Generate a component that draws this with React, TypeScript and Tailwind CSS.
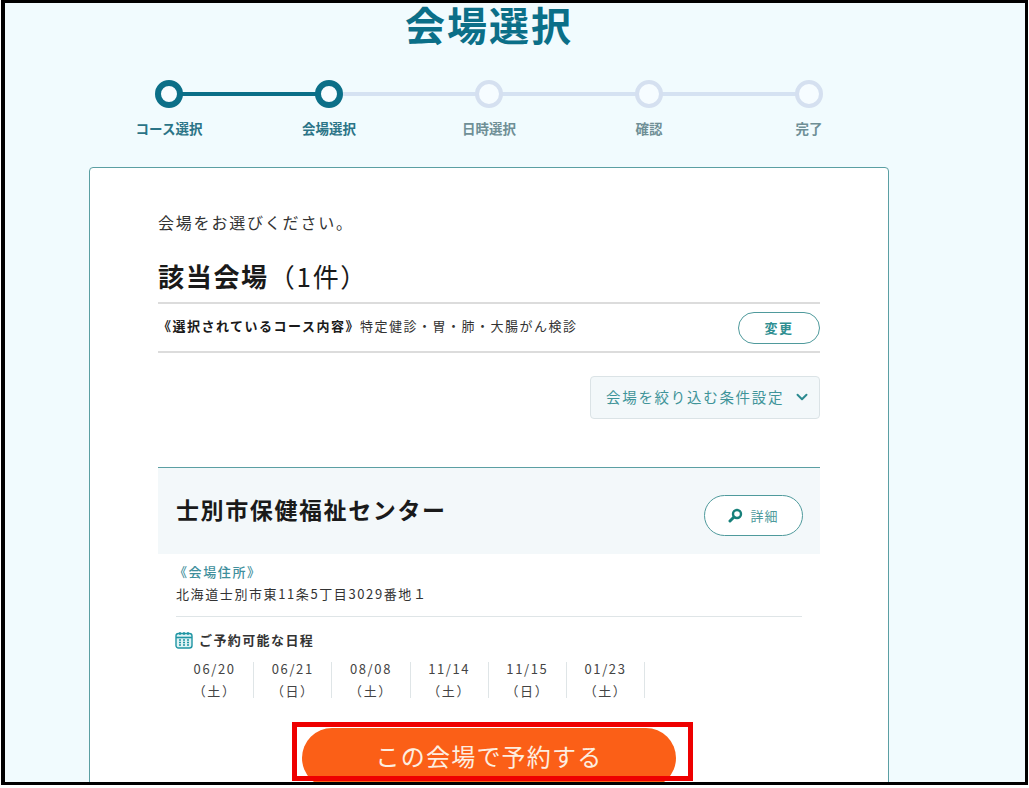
// App.tsx
import { ChevronDown } from "lucide-react";

const STEPS = [
  { label: "コース選択", done: true },
  { label: "会場選択", done: true },
  { label: "日時選択", done: false },
  { label: "確認", done: false },
  { label: "完了", done: false },
];

const DATES = [
  { date: "06/20", day: "（土）" },
  { date: "06/21", day: "（日）" },
  { date: "08/08", day: "（土）" },
  { date: "11/14", day: "（土）" },
  { date: "11/15", day: "（日）" },
  { date: "01/23", day: "（土）" },
];

function Stepper() {
  return (
    <div className="relative mt-[33px] ml-[84px] w-[800px]">
      {/* connecting line runs behind the circles */}
      <div className="absolute left-[80px] top-[12px] w-[640px] flex">
        <div className="w-[160px] h-[4px] bg-[#0b6f88]" />
        <div className="flex-1 h-[4px] bg-[#d5e2f2]" />
      </div>
      <div className="relative flex">
        {STEPS.map((s) => (
          <div key={s.label} className="w-[160px] flex flex-col items-center">
            <div
              className={
                s.done
                  ? "w-[28px] h-[28px] rounded-full border-[6px] border-[#0b6f88] bg-[#f6fcff]"
                  : "w-[28px] h-[28px] rounded-full border-[4px] border-[#d5e0f0] bg-[#f6fcff]"
              }
            />
            <div
              className={
                s.done
                  ? "mt-[10px] text-[13.5px] leading-[20px] font-bold text-[#2b7487]"
                  : "mt-[10px] text-[13.5px] leading-[20px] font-bold text-[#6f8f96]"
              }
            >
              {s.label}
            </div>
          </div>
        ))}
      </div>
    </div>
  );
}

function CalendarIcon() {
  return (
    <svg width="18" height="18" viewBox="0 0 18 18" className="shrink-0">
      <rect x="1" y="2.5" width="16" height="14.5" rx="2.5" fill="#dff3f5" stroke="#1f95a3" strokeWidth="1.4" />
      <path d="M1 6.5h16" stroke="#1f95a3" strokeWidth="1.6" />
      <path d="M5 1v3M9 1v3M13 1v3" stroke="#1f95a3" strokeWidth="1.4" />
      <path
        d="M4 9h2M8 9h2M12 9h2M4 11.5h2M8 11.5h2M12 11.5h2M4 14h2M8 14h2M12 14h2"
        stroke="#1f95a3"
        strokeWidth="1.3"
      />
    </svg>
  );
}

function SearchIcon() {
  return (
    <svg width="15" height="15" viewBox="0 0 15 15" className="shrink-0">
      <circle cx="9" cy="6" r="4" fill="none" stroke="#17807a" strokeWidth="2.4" />
      <path d="M6 9l-4 4" stroke="#17807a" strokeWidth="3" strokeLinecap="round" />
    </svg>
  );
}

export default function App() {
  return (
    <div
      className="relative w-[1029px] h-[788px] overflow-hidden bg-white"
      style={{ fontFamily: '"Noto Sans CJK JP", "Noto Sans", sans-serif' }}
    >
      <div className="ml-[1px] w-[1027px] h-[785px] border-t-[3px] border-l-[4px] border-r-[3px] border-b-[3px] border-black bg-[#f1fbfe] overflow-hidden">
        {/* Heading */}
        <h1 className="-mt-[2px] ml-[400px] text-[40px] leading-[46px] font-bold tracking-[2px] text-[#0b6f88]">
          会場選択
        </h1>

        <Stepper />

        {/* Main card */}
        <div className="mt-[29px] ml-[84px] w-[800px] h-[640px] bg-white border border-[#5b9fa3] rounded-[4px] pt-[42px] px-[68px]">
          <p className="text-[16px] leading-[24px] tracking-[1.8px] text-[#333]">会場をお選びください。</p>

          <h2 className="mt-[24px] text-[26px] leading-[36px] font-bold tracking-[1.7px] text-[#1a1a1a]">
            該当会場<span className="font-normal">（1件）</span>
          </h2>

          {/* Selected course */}
          <div className="mt-[8px] h-[51px] border-y-2 border-[#dcdcdc] flex items-center justify-between">
            <p className="-mt-[3px] text-[13px] tracking-[1.5px] text-[#333]">
              <span className="font-bold text-[#1a1a1a]">《選択されているコース内容》</span>特定健診・胃・肺・大腸がん検診
            </p>
            <button className="w-[82px] h-[32px] rounded-full border border-[#4f9a9c] bg-white text-[13px] font-bold tracking-[1.5px] text-[#2f8f92]">
              変更
            </button>
          </div>

          {/* Filter toggle */}
          <div className="mt-[23px] flex justify-end">
            <button className="w-[230px] h-[43px] pl-[15px] pb-[2px] flex items-center gap-[9px] bg-[#f3f8fa] border border-[#dbe3e6] rounded-[4px] text-[14.5px] tracking-[1.7px] text-[#3f9499]">
              会場を絞り込む条件設定
              <ChevronDown className="w-[18px] h-[18px] text-[#2b8a90]" strokeWidth={2.6} />
            </button>
          </div>

          {/* Venue */}
          <div className="mt-[48px]">
            <div className="h-[87px] border-t border-[#5b9fa3] bg-[#f3f8fa] pl-[18px] pr-[17px] flex items-center justify-between">
              <h3 className="-mt-[4px] text-[23px] font-bold tracking-[1.6px] text-[#1a1a1a]">士別市保健福祉センター</h3>
              <button className="mt-[9px] w-[99px] h-[41px] rounded-full border border-[#4f9a9c] bg-white flex items-center justify-center gap-[7px] text-[13px] tracking-[1px] text-[#4d9a9c]">
                <SearchIcon />
                詳細
              </button>
            </div>

            <div className="px-[18px]">
              <div className="pt-[8px] h-[63px] border-b border-[#dfe5e7]">
                <p className="-ml-[2px] text-[13px] leading-[20px] font-medium tracking-[1.6px] text-[#3f8f9c]">《会場住所》</p>
                <p className="mt-[2px] text-[13px] leading-[20px] text-[#333] tracking-[1.6px]">
                  北海道士別市東11条5丁目3029番地１
                </p>
              </div>

              <div className="mt-[13px] -ml-px flex items-center gap-[6px] text-[13px] font-bold tracking-[1.4px] text-[#333]">
                <CalendarIcon />
                ご予約可能な日程
              </div>

              <div className="mt-[12px] flex">
                {DATES.map((d) => (
                  <div
                    key={d.date}
                    className="w-[78.2px] h-[36px] border-r border-[#dfe5e7] flex flex-col items-center justify-center text-[13px] leading-[22px] text-[#444] tracking-[1.6px]"
                  >
                    <span>{d.date}</span>
                    <span>{d.day}</span>
                  </div>
                ))}
              </div>
            </div>

            <div className="mt-[30px] flex justify-center">
              <button className="w-[374px] h-[60px] pb-[3px] rounded-full bg-[#fb5f17] text-[24px] tracking-[1.2px] text-[#fdeee0]">
                この会場で予約する
              </button>
            </div>
          </div>
        </div>
      </div>

      {/* red highlight box drawn over the button */}
      <div className="absolute left-[292px] top-[722px] w-[401px] h-[59px] border-[5px] border-[#ee0000]" />
    </div>
  );
}
